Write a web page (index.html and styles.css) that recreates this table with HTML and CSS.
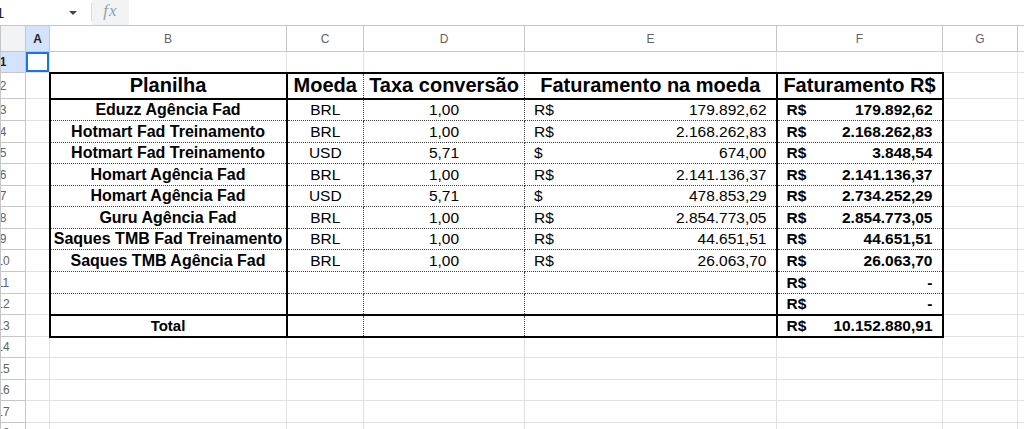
FILE: index.html
```html
<!DOCTYPE html>
<html lang="pt-BR">
<head>
  <meta charset="UTF-8">
  <title>Planilha de faturamento</title>
  <link rel="stylesheet" href="styles.css">
</head>
<body>

  <!-- Formula bar -->
  <div class="toolbar">
    <div class="namebox">
      <span class="namebox-text">1</span>
      <svg class="caret" width="8" height="4" viewBox="0 0 8 4"><path d="M0 0h8L4 4z" fill="#444"/></svg>
    </div>
    <div class="sep"></div>
    <div class="fx">fx</div>
  </div>

  <!-- Sheet -->
  <table class="sheet">
    <colgroup>
      <col class="w-rh"><col class="w-a"><col class="w-b"><col class="w-c"><col class="w-d"><col class="w-e"><col class="w-f"><col class="w-g"><col class="w-h">
    </colgroup>
    <tr class="h-head">
      <th class="corner"></th>
      <th class="ch ch-sel">A</th>
      <th class="ch">B</th>
      <th class="ch">C</th>
      <th class="ch">D</th>
      <th class="ch">E</th>
      <th class="ch">F</th>
      <th class="ch">G</th>
      <th class="ch"></th>
    </tr>
    <tr class="h21">
      <th class="rh rh-sel"><span>1</span></th>
      <td class="sel"></td><td></td><td></td><td></td><td></td><td></td><td></td><td></td>
    </tr>
    <tr class="h26">
      <th class="rh"><span>2</span></th>
      <td></td>
      <td class="tbl bl br bt bb title">Planilha</td>
      <td class="tbl bt bb title">Moeda</td>
      <td class="tbl bt bb title">Taxa conversão</td>
      <td class="tbl br bt bb title">Faturamento na moeda</td>
      <td class="tbl br bt bb title">Faturamento R$</td>
      <td></td><td></td>
    </tr>
    <tr class="h22">
      <th class="rh"><span>3</span></th>
      <td></td>
      <td class="tbl bl br name">Eduzz Agência Fad</td>
      <td class="tbl mid">BRL</td>
      <td class="tbl mid">1,00</td>
      <td class="tbl br"><div class="acc"><span>R$</span><span>179.892,62</span></div></td>
      <td class="tbl br strong"><div class="acc"><span>R$</span><span>179.892,62</span></div></td>
      <td></td><td></td>
    </tr>
    <tr class="h22">
      <th class="rh"><span>4</span></th>
      <td></td>
      <td class="tbl bl br name">Hotmart Fad Treinamento</td>
      <td class="tbl mid">BRL</td>
      <td class="tbl mid">1,00</td>
      <td class="tbl br"><div class="acc"><span>R$</span><span>2.168.262,83</span></div></td>
      <td class="tbl br strong"><div class="acc"><span>R$</span><span>2.168.262,83</span></div></td>
      <td></td><td></td>
    </tr>
    <tr class="h21">
      <th class="rh"><span>5</span></th>
      <td></td>
      <td class="tbl bl br name">Hotmart Fad Treinamento</td>
      <td class="tbl mid">USD</td>
      <td class="tbl mid">5,71</td>
      <td class="tbl br"><div class="acc"><span>$</span><span>674,00</span></div></td>
      <td class="tbl br strong"><div class="acc"><span>R$</span><span>3.848,54</span></div></td>
      <td></td><td></td>
    </tr>
    <tr class="h22">
      <th class="rh"><span>6</span></th>
      <td></td>
      <td class="tbl bl br name">Homart Agência Fad</td>
      <td class="tbl mid">BRL</td>
      <td class="tbl mid">1,00</td>
      <td class="tbl br"><div class="acc"><span>R$</span><span>2.141.136,37</span></div></td>
      <td class="tbl br strong"><div class="acc"><span>R$</span><span>2.141.136,37</span></div></td>
      <td></td><td></td>
    </tr>
    <tr class="h21">
      <th class="rh"><span>7</span></th>
      <td></td>
      <td class="tbl bl br name">Homart Agência Fad</td>
      <td class="tbl mid">USD</td>
      <td class="tbl mid">5,71</td>
      <td class="tbl br"><div class="acc"><span>$</span><span>478.853,29</span></div></td>
      <td class="tbl br strong"><div class="acc"><span>R$</span><span>2.734.252,29</span></div></td>
      <td></td><td></td>
    </tr>
    <tr class="h22">
      <th class="rh"><span>8</span></th>
      <td></td>
      <td class="tbl bl br name">Guru Agência Fad</td>
      <td class="tbl mid">BRL</td>
      <td class="tbl mid">1,00</td>
      <td class="tbl br"><div class="acc"><span>R$</span><span>2.854.773,05</span></div></td>
      <td class="tbl br strong"><div class="acc"><span>R$</span><span>2.854.773,05</span></div></td>
      <td></td><td></td>
    </tr>
    <tr class="h21">
      <th class="rh"><span>9</span></th>
      <td></td>
      <td class="tbl bl br name">Saques TMB Fad Treinamento</td>
      <td class="tbl mid">BRL</td>
      <td class="tbl mid">1,00</td>
      <td class="tbl br"><div class="acc"><span>R$</span><span>44.651,51</span></div></td>
      <td class="tbl br strong"><div class="acc"><span>R$</span><span>44.651,51</span></div></td>
      <td></td><td></td>
    </tr>
    <tr class="h22">
      <th class="rh"><span>10</span></th>
      <td></td>
      <td class="tbl bl br name">Saques TMB Agência Fad</td>
      <td class="tbl mid">BRL</td>
      <td class="tbl mid">1,00</td>
      <td class="tbl br"><div class="acc"><span>R$</span><span>26.063,70</span></div></td>
      <td class="tbl br strong"><div class="acc"><span>R$</span><span>26.063,70</span></div></td>
      <td></td><td></td>
    </tr>
    <tr class="h22">
      <th class="rh"><span>11</span></th>
      <td></td>
      <td class="tbl bl br"></td>
      <td class="tbl"></td>
      <td class="tbl"></td>
      <td class="tbl br"></td>
      <td class="tbl br strong"><div class="acc dash"><span>R$</span><span>-</span></div></td>
      <td></td><td></td>
    </tr>
    <tr class="h21">
      <th class="rh"><span>12</span></th>
      <td></td>
      <td class="tbl bl br"></td>
      <td class="tbl"></td>
      <td class="tbl"></td>
      <td class="tbl br"></td>
      <td class="tbl br strong"><div class="acc dash"><span>R$</span><span>-</span></div></td>
      <td></td><td></td>
    </tr>
    <tr class="h22">
      <th class="rh"><span>13</span></th>
      <td></td>
      <td class="tbl bl br bt bb total">Total</td>
      <td class="tbl bt bb"></td>
      <td class="tbl bt bb"></td>
      <td class="tbl br bt bb"></td>
      <td class="tbl br bt bb strong"><div class="acc"><span>R$</span><span>10.152.880,91</span></div></td>
      <td></td><td></td>
    </tr>
    <tr class="h21">
      <th class="rh"><span>14</span></th>
      <td></td><td></td><td></td><td></td><td></td><td></td><td></td><td></td>
    </tr>
    <tr class="h22">
      <th class="rh"><span>15</span></th>
      <td></td><td></td><td></td><td></td><td></td><td></td><td></td><td></td>
    </tr>
    <tr class="h21">
      <th class="rh"><span>16</span></th>
      <td></td><td></td><td></td><td></td><td></td><td></td><td></td><td></td>
    </tr>
    <tr class="h22">
      <th class="rh"><span>17</span></th>
      <td></td><td></td><td></td><td></td><td></td><td></td><td></td><td></td>
    </tr>
    <tr class="h21">
      <th class="rh"><span>18</span></th>
      <td></td><td></td><td></td><td></td><td></td><td></td><td></td><td></td>
    </tr>
  </table>

</body>
</html>
```

FILE: styles.css
```css
/* General Reset */
* {
  margin: 0;
  padding: 0;
  box-sizing: border-box;
}

body {
  font-family: 'Liberation Sans', Arial, sans-serif;
  background-color: #fff;
  color: #000;
  overflow: hidden;
  width: 1024px;
  height: 429px;
}

/* Formula bar */
.toolbar {
  display: flex;
  height: 25px;
  align-items: stretch;
}

.namebox {
  width: 91px;
  display: flex;
  align-items: center;
  justify-content: space-between;
  padding-right: 14px;
}

.namebox-text {
  font-size: 15px;
  color: #202124;
  margin-left: -4px;
}

.sep {
  width: 1px;
  margin: 3px 0 4px;
  background-color: #dadce0;
}

.fx {
  width: 37px;
  background-color: #f1f3f4;
  color: #9aa0a6;
  font-family: 'Liberation Serif', serif;
  font-style: italic;
  font-size: 17px;
  text-align: center;
  line-height: 22px;
  letter-spacing: 1px;
}

/* Sheet grid */
.sheet {
  border-collapse: collapse;
  table-layout: fixed;
  width: 1117px;
}

.w-rh { width: 25px; }
.w-a { width: 24px; }
.w-b { width: 237px; }
.w-c { width: 77px; }
.w-d { width: 161px; }
.w-e { width: 252px; }
.w-f { width: 166px; }
.w-g { width: 75px; }
.w-h { width: 100px; }

.h-head { height: 26px; }
.h21 { height: 21px; }
.h22 { height: 22px; }
.h26 { height: 26px; }

.sheet td {
  border: 1px solid #e1e1e1;
  font-size: 15.5px;
  white-space: nowrap;
  overflow: hidden;
  padding: 0 3px;
  vertical-align: middle;
}

.sheet th {
  font-weight: normal;
}

.corner {
  background-color: #f1f3f4;
  border: 1px solid #c4c7c5;
}

.ch {
  border: 1px solid #c4c7c5;
  font-size: 12px;
  color: #5f6368;
  text-align: center;
  vertical-align: middle;
}

.ch-sel {
  background-color: #d3e3fd;
  color: #1f1f1f;
  font-weight: bold !important;
}

.rh {
  border: 1px solid #c4c7c5;
  border-top-color: #e1e1e1;
  font-size: 12px;
  color: #5f6368;
  overflow: hidden;
  text-align: left;
  vertical-align: middle;
}

.rh span {
  display: block;
  width: 46px;
  margin-left: -21px;
  text-align: center;
}

.rh-sel {
  background-color: #d3e3fd;
  color: #1f1f1f;
  font-weight: bold !important;
}

.sheet td.sel {
  box-shadow: inset 0 0 0 2px #1a73e8;
}

/* Summary table borders */
.sheet td.tbl {
  border: 1px dotted #444;
}

.sheet td.bl { border-left: 2px solid #000; }
.sheet td.br { border-right: 2px solid #000; }
.sheet td.bt { border-top: 2px solid #000; }
.sheet td.bb { border-bottom: 2px solid #000; }

.title {
  font-size: 20px !important;
  font-weight: bold;
  text-align: center;
}

.name {
  font-size: 16px !important;
  font-weight: bold;
  text-align: center;
}

.total {
  font-size: 15px !important;
  font-weight: bold;
  text-align: center;
}

.mid {
  text-align: center;
}

.strong {
  font-weight: bold;
}

.sheet td .acc {
  display: flex;
  justify-content: space-between;
  padding: 0 6px;
}

.acc.dash {
  padding-right: 24px;
}
```
